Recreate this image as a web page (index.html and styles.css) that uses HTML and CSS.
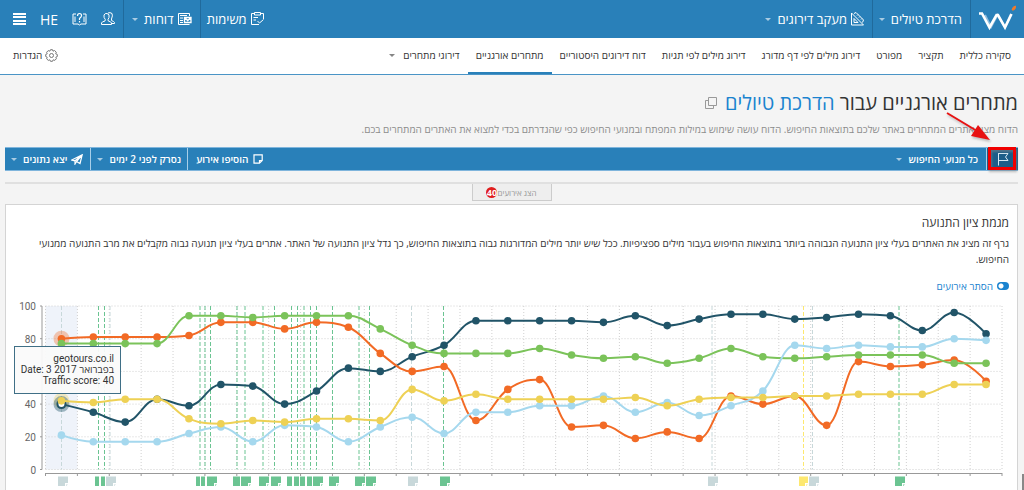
FILE: index.html
```html
<!DOCTYPE html>
<html lang="he" dir="rtl">
<head>
<meta charset="utf-8">
<title>מתחרים אורגניים</title>
<link rel="stylesheet" href="styles.css">
</head>
<body>
<header class="topbar">
  <a class="logo" href="#" aria-label="דף הבית">
    <svg width="40" height="30" viewBox="0 0 40 30">
      <path d="M7 11 13 23 19.500 11 27 23 33 10" fill="none" stroke="#8dbbdd" stroke-width="2"/>
      <path d="M1 9.500H4L11.500 23.500 18.500 11H20L27 23.500 33.500 10" fill="none" stroke="#fff" stroke-width="2.600"/>
      <path d="M34 6Q34.500 2.500 37.500 2Q38 5 35.500 6Z" fill="#f07a2c" stroke="#f07a2c"/>
    </svg>
  </a>
  <button class="top-item site">הדרכת טיולים<span class="caret"></span></button>
  <button class="top-item tracking">
    <svg width="13" height="14" viewBox="0 0 13 14" fill="none" stroke="#fff"><path d="M.5 1V13H12.500L.5 1ZM3 6.500V10.500H7ZM3 1.500 5 .5 12.500 8 11.500 10.500M7 2.500 6 3.500M9 4.500 8 5.500M11 6.500 10 7.500"/></svg>
    מעקב דירוגים<span class="caret"></span></button>
  <span class="spacer"></span>
  <button class="top-item tasks">
    <svg width="13" height="14" viewBox="0 0 13 14" fill="none" stroke="#fff"><path d="M3 1.500H.5V12.500H8M10 1.500H12.500V7M3.500.5H9.500V3H3.500ZM2.500 5.500H7M2.500 8H5M6.500 9 8.500 11 12.500 7.500"/></svg>
    משימות</button>
  <button class="top-item reports">
    <svg width="14" height="14" viewBox="0 0 14 14" fill="none" stroke="#fff"><path d="M11.500 4V1.500H.5V12.500H11.500M2 3.500H9M2 6H5M2 8.500H5M2 10.500H5"/><path d="M6.500 5.500H13V10.500H6.500ZM6.500 5.500 9.700 8.500 13 5.500" stroke-width="1.300"/></svg>
    דוחות<span class="caret"></span></button>
  <div class="tools">
    <button aria-label="משתמשים"><svg width="14" height="14" viewBox="0 0 14 14" fill="none" stroke="#fff"><path d="M.5 12.500V11Q1 9.500 4 9L4.300 7.500Q2.500 5.500 3 3Q4 1 6 1.500Q9 2 8 5.500L7 7.500 7.300 9Q10 9.500 10.500 11V12.500ZM7 1Q9 0 11 1.500Q12 3.500 10.500 7V8.500Q13 9.500 13.500 10.500V11.500H11"/></svg></button>
    <button aria-label="עזרה"><svg width="15" height="14" viewBox="0 0 15 14" fill="none" stroke="#fff"><path d="M4 2H1V12H6L7.500 13 9 12H14V2H11M3 4.500V10M12 4.500V10"/><path d="M5.500 4Q5.500 1.500 7.500 1.500Q9.700 1.500 9.500 3.800Q9.500 5 7.500 6.500V8M7.500 9V10.500" stroke-width="1.200"/></svg></button>
    <button class="lang">HE</button>
    <button aria-label="תפריט"><svg width="13" height="13" viewBox="0 0 13 13" fill="none" stroke="#fff" stroke-width="2"><path d="M0 1H13M0 4H13M0 8H13M0 11H13"/></svg></button>
  </div>
</header>
<nav class="subnav">
  <a href="#">סקירה כללית</a>
  <a href="#">תקציר</a>
  <a href="#">מפורט</a>
  <a href="#">דירוג מילים לפי דף מדורג</a>
  <a href="#">דירוג מילים לפי תגיות</a>
  <a href="#">דוח דירוגים היסטוריים</a>
  <a href="#" class="active">מתחרים אורגניים</a>
  <a href="#">דירוגי מתחרים<span class="caret"></span></a>
  <a href="#" class="settings">
    <svg width="13" height="13" viewBox="0 0 13 13" fill="none" stroke="#777"><path d="M5.500.7H7.500L8 2.200 9.500 1.500 11.300 3.200 10.700 4.800 12.300 5.500V7.500L10.800 8.200 11.400 9.700 9.800 11.400 8.200 10.800 7.500 12.300H5.500L4.800 10.800 3.300 11.400 1.600 9.800 2.200 8.200.7 7.500V5.500L2.200 4.800 1.600 3.300 3.200 1.600 4.800 2.200Z"/><circle cx="6.500" cy="6.500" r="2"/></svg>
    הגדרות</a>
</nav>
<main>
  <div class="heading">
    <h1>מתחרים אורגניים עבור <a href="#">הדרכת טיולים</a></h1>
    <svg width="12" height="12" viewBox="0 0 12 12" fill="none" stroke="#999"><path d="M3.500.5H11.500V8.500H3.500ZM3.500 3.500H.5V11.500H8.500V8.500"/></svg>
  </div>
  <p class="intro">הדוח מציג אתרים המתחרים באתר שלכם בתוצאות החיפוש. הדוח עושה שימוש במילות המפתח ובמנועי החיפוש כפי שהגדרתם בכדי למצוא את האתרים המתחרים בכם.</p>
  <div class="toolbar">
    <button class="flag" aria-label="דגל">
      <svg width="12" height="14" viewBox="0 0 12 14" fill="none" stroke="#d5e6f2"><path d="M1.500 1V13.500M1.500 1.500H11L8.500 5 11 8.500H1.500"/></svg>
    </button>
    <button class="engines">כל מנועי החיפוש<span class="caret"></span></button>
    <span class="spacer"></span>
    <button class="add-event">
      <svg width="10" height="10" viewBox="0 0 10 10" fill="none" stroke="#fff" stroke-width="1.200"><path d="M1 .8H9.200V6.500L6.500 9.200H1ZM9 6.500H6.500V9"/></svg>
      הוסיפו אירוע</button>
    <button class="scanned">נסרק לפני 2 ימים<span class="caret"></span></button>
    <button class="export">
      <svg width="12" height="11" viewBox="0 0 12 11" fill="none" stroke="#fff" stroke-width="1.200"><path d="M.8 6 11.200.8 9 9.500 5.500 7.500 4 10V6.800ZM4 6.800 11 1 5.500 7.500"/></svg>
      יצא נתונים<span class="caret"></span></button>
    <svg class="arrow" width="80" height="68" viewBox="0 0 80 68">
      <path d="M9 10 44 31" stroke="#e81212" stroke-width="2"/>
      <path d="M52 37 33 33 40 22Z" fill="#e81212"/>
      <path d="M51.500 45.500H76.500V65.500H51.500Z" fill="none" stroke="#f00000" stroke-width="3"/>
    </svg>
  </div>
  <div class="events-bar"><button>הצג אירועים<span class="count">40</span></button></div>
  <section class="card">
    <h2>מגמת ציון התנועה</h2>
    <p>גרף זה מציג את האתרים בעלי ציון התנועה הגבוהה ביותר בתוצאות החיפוש בעבור מילים ספציפיות. ככל שיש יותר מילים המדורגות גבוה בתוצאות החיפוש, כך גדל ציון התנועה של האתר. אתרים בעלי ציון תנועה גבוה מקבלים את מרב התנועה ממנועי החיפוש.</p>
    <label class="toggle"><input type="checkbox" checked>הסתר אירועים</label>
    <div class="chart">
      <svg id="plot" viewBox="6 296 1011 194" direction="ltr"></svg>
      <div class="tooltip" dir="ltr">geotours.co.il<br>Date: 3 בפברואר 2017<br>Traffic score: 40</div>
    </div>
  </section>
</main>
<span class="side-tab"></span>
<script src="chart.js"></script>
</body>
</html>
```
FILE: styles.css
```css
* { box-sizing: border-box; }
body {
  margin: 0;
  background: #f4f4f4;
  color: #333;
  font-family: "Open Sans", "Noto Sans", sans-serif;
  font-size: 10px;
  overflow: hidden;
}
button {
  margin: 0;
  padding: 0;
  border: 0;
  background: none;
  color: inherit;
  font: inherit;
  display: flex;
  align-items: center;
}
a { color: inherit; text-decoration: none; }
svg { display: block; flex: none; }
.spacer { flex: 1; }
.caret {
  border: 3px solid transparent;
  border-top-color: currentColor;
  border-bottom: 0;
  opacity: .6;
  margin-inline-start: 8px;
  display: inline-block;
  vertical-align: middle;
}

.topbar {
  display: flex;
  height: 38px;
  background: #2980b9;
  color: #fff;
  font-size: 13px;
}
.logo {
  width: 54px;
  padding: 4px 6px 0 0;
  border-left: 1px solid #206a9c;
}
.top-item { gap: 4px; padding: 0 8px; white-space: nowrap; }
.site { width: 98px; border-left: 1px solid #206a9c; }
.tasks, .reports { border-left: 1px solid #206a9c; }
.tasks { padding-left: 6px; }
.top-item .caret { margin-inline-start: 2px; }
.tasks { margin-inline-start: 0; }
.tools {
  display: flex;
  align-items: center;
  gap: 14px;
  padding: 0 8px 0 13px;
}
.lang { font-size: 14px; }

.subnav {
  display: flex;
  height: 37px;
  padding: 0 5px;
  background: #fff;
  border-bottom: 1px solid #4a94c6;
}
.subnav a {
  display: flex;
  align-items: center;
  padding: 0 8px;
  border-bottom: 2px solid transparent;
  white-space: nowrap;
}
.subnav .active { border-bottom-color: #2980b9; }
.subnav .settings { margin-inline-start: auto; gap: 3px; }

main { padding: 0 6px 0 5px; }
.heading {
  display: flex;
  align-items: center;
  gap: 8px;
  padding-top: 14px;
}
h1 {
  margin: 0;
  font-size: 20px;
  line-height: 28px;
  font-weight: 400;
}
h1 a { color: #1a83cf; }
.intro {
  margin: 4px 0 10px;
  line-height: 16px;
  color: #8c8c8c;
}
.toolbar {
  position: relative;
  display: flex;
  height: 24px;
  background: #2980b9;
  color: #fff;
  border: 1px solid #7fb5dc;
  border-width: 1px 0;
}
.toolbar button { gap: 4px; padding: 0 8px; font-weight: 600; white-space: nowrap; }
.toolbar .caret { margin-inline-start: 2px; }
.toolbar .flag {
  width: 32px;
  justify-content: center;
  background: #1c5d89;
  border-left: 1px solid #a8cfe9;
}
.toolbar .add-event { gap: 5px; }
.toolbar .scanned { padding: 0 6px; border-right: 1px solid #a8cfe9; }
.toolbar .export { padding: 0 8px 0 6px; padding-right: 7px; border-right: 1px solid #a8cfe9; }
.arrow { position: absolute; right: 0; top: -45px; filter: drop-shadow(1px 2px 1px #8888); }

.events-bar {
  display: flex;
  justify-content: center;
  margin-top: 11px;
  border-top: 2px solid #e0e0e0;
}
.events-bar button {
  width: 80px;
  height: 17px;
  justify-content: center;
  border: 1px solid #ccc;
  border-top: 0;
  background: #eee;
  color: #999;
  font-size: 8px;
}
.count {
  width: 11px;
  height: 11px;
  border-radius: 50%;
  background: #e01e1e;
  color: #fff;
  font-size: 9px;
  font-weight: 700;
  line-height: 11px;
  display: flex;
  justify-content: center;
}
.card {
  margin-top: 3px;
  background: #fff;
  border: 1px solid #d4d4d4;
  border-bottom: 0;
}
h2 {
  margin: 0;
  padding: 10px 8px 0;
  font-size: 12px;
  line-height: 16px;
  font-weight: 400;
}
.card p { margin: 4px 0 0; padding: 0 8px; line-height: 16px; }
.toggle {
  display: flex;
  align-items: center;
  gap: 4px;
  margin: 11px 8px 2px;
  height: 16px;
  color: #1a83cf;
}
.toggle input {
  appearance: none;
  margin: 0;
  width: 12px;
  height: 8px;
  border-radius: 4px;
  background: radial-gradient(circle at 4px 4px, #fff 2px, #1a83cf 3px);
}
.chart { position: relative; }
.chart svg { width: 100%; height: auto; }
.chart text { font: 10px Roboto, "Liberation Sans", sans-serif; fill: #666; }
.tooltip {
  position: absolute;
  left: 8px;
  top: 50px;
  width: 107px;
  height: 48px;
  padding: 6px 6px 0 0;
  border: 1px solid #3f6f86;
  background: #fafafaf0;
  color: #333;
  font: 10px/11px Roboto, "Open Sans", sans-serif;
  text-align: right;
  white-space: nowrap;
}
.side-tab {
  position: fixed;
  right: 0;
  bottom: 0;
  width: 2px;
  height: 16px;
  background: #888;
}
```
FILE: chart.js
```js
const plot = document.getElementById('plot');
const LEFT = 45.5, RIGHT = 1002, BOTTOM = 469.5, TOP = 306;
const STEP = (RIGHT - LEFT) / 30;
const px = i => LEFT + STEP * (i + 0.5);
const py = v => BOTTOM - v * (BOTTOM - TOP) / 100;

function add(tag, attrs, text) {
  const el = document.createElementNS('http://www.w3.org/2000/svg', tag);
  for (const key in attrs) el.setAttribute(key, attrs[key]);
  if (text !== undefined) el.textContent = text;
  plot.appendChild(el);
}
function line(x1, y1, x2, y2, stroke, extra) {
  add('line', Object.assign({ x1, y1, x2, y2, stroke }, extra));
}

const series = [
  ['#215468', [40,35,29,43,39,52,51,40,48,62,60,69,76,91,91,91,91,90,94,88,92,95,95,92,93,95,94,85,96,83]],
  ['#f26a25', [80,81,81,81,82,90,90,86,90,87,71,60,63,30,49,55,26,27,19,23,19,45,40,45,27,66,63,64,67,54]],
  ['#7bc35a', [77,77,77,77,94,94,93,94,94,94,86,76,71,71,71,74,70,68,69,65,68,74,69,68,69,70,70,70,65,65]],
  ['#a5d8ee', [21,17,17,17,22,26,17,27,26,17,26,32,22,35,35,39,39,45,35,41,33,39,48,76,74,76,75,75,80,79]],
  ['#eed155', [42,41,43,43,31,28,30,29,31,31,30,49,42,46,43,43,43,43,44,39,43,44,44,45,45,46,46,46,52,52]]
];
const GREEN = '#6bc492', GREY = '#c8d8da', YELLOW = '#fde870';
/* line x, marker x, marker width, colour */
const events = [
  [61.5,58,10,GREY],[98.5,95,4,GREEN],[104.5,101,4,GREEN],[110,106,10,GREY],
  [200,196,4,GREEN],[205,201,4,GREEN],[210.5,207,10,GREEN],[237,233,7,GREEN],
  [245,241,10,GREEN],[263,259,10,GREEN],[274.5,271,10,GREEN],[291.5,287,5,GREEN],
  [297.5,294,5,GREEN],[304,300,5,GREEN],[310.5,307,5,GREEN],[316.5,313,10,GREEN],
  [332.5,329,10,GREEN],[359,355,10,GREEN],[369.5,366,10,GREEN],[411.5,408,10,GREY],
  [443.5,440,10,GREEN],[712,708,10,GREY],[803.5,799,9,YELLOW],[812.5,809,10,GREY],[899,895,10,GREEN]
];

add('rect', { x: LEFT, y: TOP, width: STEP, height: BOTTOM - TOP, fill: '#eff3fa' });
/* the 60 label would lie under the open tooltip */
const labels = [0, 20, 40, 80, 100];
for (let v = 0; v <= 100; v += 20) {
  line(LEFT, py(v), RIGHT, py(v), '#d0d0d0', { 'stroke-dasharray': '1 2' });
  line(40, py(v), 42, py(v), '#999');
  if (labels.includes(v)) add('text', { x: 36, y: py(v) + 4, 'text-anchor': 'end' }, v);
}
for (let i = 0; i <= 30; i++) {
  const x = LEFT + STEP * i;
  line(x, TOP, x, BOTTOM, '#d0d0d0', { 'stroke-dasharray': '1 2' });
  line(x, 473, x, 476, '#999');
}
line(42, TOP, 42, BOTTOM, '#999');
line(LEFT, 473.5, RIGHT, 473.5, '#999');

for (const [lx, mx, w, color] of events) {
  line(lx, TOP, lx, BOTTOM, color, { 'stroke-dasharray': '4 2' });
  const end = mx + w;
  if (w < 8) {
    add('rect', { x: mx, y: 476.5, width: w, height: 9.5, fill: color });
  } else {
    add('path', { d: `M${mx} 476.5H${end}V483H${end - 3}V486H${mx}Z`, fill: color });
    add('path', { d: `M${end - 2} 484.500H${end}L${end - 2} 486Z`, fill: color });
  }
}

/* spline whose control points stay flat at local extremes */
function spline(points) {
  let d = `M${points[0][0]} ${points[0][1]}`;
  let out = points[0];
  for (let i = 1; i < points.length; i++) {
    const [x, y] = points[i], prev = points[i - 1], next = points[i + 1];
    let inn = [x, y], nextOut = [x, y];
    if (next) {
      const lx = (1.5 * x + prev[0]) / 2.5, rx = (1.5 * x + next[0]) / 2.5;
      let ly = (1.5 * y + prev[1]) / 2.5, ry = (1.5 * y + next[1]) / 2.5;
      const fix = (ry - ly) * (rx - x) / (rx - lx) + y - ry;
      ly += fix;
      ry += fix;
      if (ly > Math.max(prev[1], y)) { ly = Math.max(prev[1], y); ry = 2 * y - ly; }
      else if (ly < Math.min(prev[1], y)) { ly = Math.min(prev[1], y); ry = 2 * y - ly; }
      if (ry > Math.max(next[1], y)) { ry = Math.max(next[1], y); ly = 2 * y - ry; }
      else if (ry < Math.min(next[1], y)) { ry = Math.min(next[1], y); ly = 2 * y - ry; }
      inn = [lx, ly];
      nextOut = [rx, ry];
    }
    d += `C${out} ${inn} ${x} ${y}`;
    out = nextOut;
  }
  return d;
}

add('circle', { cx: px(0), cy: py(80), r: 8, fill: '#f26a25', 'fill-opacity': .35 });
add('circle', { cx: px(0), cy: py(42), r: 8, fill: '#eed155', 'fill-opacity': .35 });
add('circle', { cx: px(0), cy: py(40), r: 8, fill: '#215468', 'fill-opacity': .4 });
for (const [color, values] of series) {
  const points = values.map((v, i) => [px(i), py(v)]);
  add('path', { d: spline(points), fill: 'none', stroke: color, 'stroke-width': 2 });
  points.forEach(([cx, cy], i) => {
    const open = i === 0 && values[0] === 40;
    add('circle', { cx, cy, r: open ? 4 : 3.8, fill: open ? '#fff' : color, stroke: color, 'stroke-width': open ? 2 : 0 });
  });
}
```
